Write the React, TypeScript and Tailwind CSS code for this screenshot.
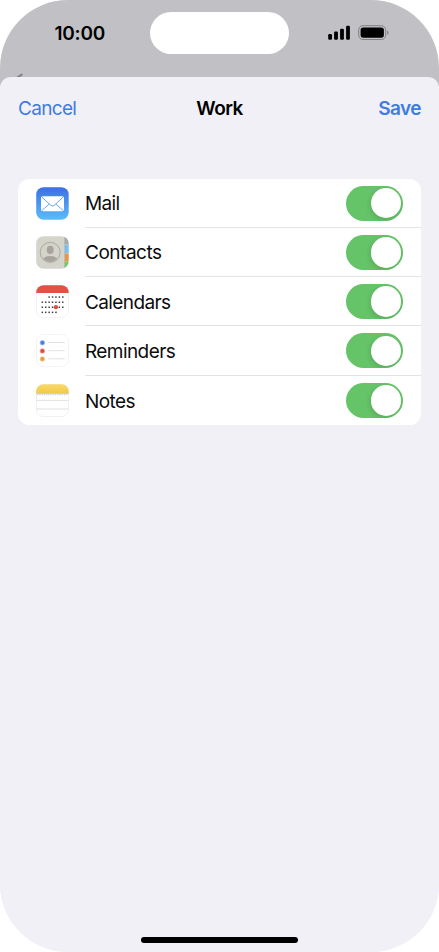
import type { ReactNode } from 'react';

function MailIcon() {
  return (
    <svg viewBox="0 0 33 33" className="size-[33px]">
      <defs>
        <linearGradient id="mail" x1="0" y1="0" x2="0" y2="1">
          <stop offset="0" stopColor="#3c6fe5" />
          <stop offset="1" stopColor="#5bbcf6" />
        </linearGradient>
      </defs>
      <rect x=".2" y=".2" width="32.5" height="32.5" rx="7.4" fill="url(#mail)" />
      <rect x="5" y="9.2" width="23" height="15" rx="1.8" fill="#fff" />
      <path d="M5.6 9.8 14.6 18.2Q16.5 19.8 18.4 18.2L27.4 9.8M5.7 23.6 13.2 17M27.3 23.6 19.8 17" fill="none" stroke="#5a9cec" strokeWidth=".9" />
    </svg>
  );
}

function ContactsIcon() {
  return (
    <svg viewBox="0 0 33 33" className="size-[33px]">
      <defs>
        <clipPath id="contacts"><rect x=".2" y=".2" width="32.5" height="32.5" rx="7.4" /></clipPath>
        <clipPath id="portrait"><circle cx="14.2" cy="16.4" r="9.5" /></clipPath>
      </defs>
      <g clipPath="url(#contacts)">
        <path fill="#d5d4ca" d="M0 0h28.7v33H0z" />
        <path fill="#a9aaa5" d="M28.7 0H33v8.5h-4.3z" />
        <path fill="#77bff5" d="M28.7 8.5H33v9h-4.3z" />
        <path fill="#ed9443" d="M28.7 17.5H33v8h-4.3z" />
        <path fill="#70cb69" d="M28.7 25.5H33V33h-4.3z" />
        <path stroke="#b4b3aa" strokeWidth=".7" d="M28.5 0v33" />
      </g>
      <circle cx="14.2" cy="16.4" r="10" fill="none" stroke="#aaa8a1" strokeWidth="1" />
      <g clipPath="url(#portrait)" fill="#a8a39d">
        <ellipse cx="14.2" cy="13.9" rx="3.5" ry="4.1" />
        <ellipse cx="14.2" cy="25" rx="8" ry="4.9" />
      </g>
    </svg>
  );
}

function CalendarIcon() {
  const rows = [
    { y: 12, from: 2, to: 7 },
    { y: 17.2, from: 0, to: 7 },
    { y: 22.2, from: 0, to: 7 },
    { y: 27.3, from: 0, to: 5 },
  ];
  return (
    <svg viewBox="0 0 33 33" className="size-[33px]">
      <defs><clipPath id="calendar"><rect x=".2" y=".2" width="32.5" height="32.5" rx="7.4" /></clipPath></defs>
      <rect x=".4" y=".4" width="32.2" height="32.2" rx="7.3" fill="#fff" stroke="#ececec" strokeWidth=".7" />
      <path d="M0 0h33v8H0z" fill="#e35045" clipPath="url(#calendar)" />
      {rows.map((r) =>
        Array.from({ length: r.to - r.from }, (_, i) => (
          <rect key={`${r.y}-${i}`} x={5.6 + (r.from + i) * 3.4} y={r.y - 0.7} width="1.5" height="1.5" fill="#404040" />
        )),
      )}
      <circle cx="19.9" cy="22.2" r="2.1" fill="#dc4b40" />
    </svg>
  );
}

function RemindersIcon() {
  const items = [
    { y: 8.7, color: '#4480ed', halo: '#b5cefa' },
    { y: 16.9, color: '#df4941', halo: '#f5b7b4' },
    { y: 25, color: '#ee9a3c', halo: '#f9d7ae' },
  ];
  return (
    <svg viewBox="0 0 33 33" className="size-[33px]">
      <rect x=".4" y=".4" width="32.2" height="32.2" rx="7.3" fill="#fff" stroke="#eee" strokeWidth=".7" />
      {items.map((item) => (
        <g key={item.y}>
          <circle cx="6.4" cy={item.y} r="2.7" fill={item.halo} />
          <circle cx="6.4" cy={item.y} r="2" fill={item.color} />
          <path d={`M12.2 ${item.y - 0.2}H28.7`} stroke="#dedede" strokeWidth=".9" />
        </g>
      ))}
    </svg>
  );
}

function NotesIcon() {
  return (
    <svg viewBox="0 0 33 33" className="size-[33px]">
      <defs>
        <clipPath id="notes"><rect x=".2" y=".2" width="32.5" height="32.5" rx="7.4" /></clipPath>
        <linearGradient id="pad" x1="0" y1="0" x2="0" y2="1">
          <stop offset="0" stopColor="#f8d970" />
          <stop offset="1" stopColor="#f2cb43" />
        </linearGradient>
      </defs>
      <rect x=".4" y=".4" width="32.2" height="32.2" rx="7.3" fill="#fff" stroke="#eaeaea" strokeWidth=".7" />
      <g clipPath="url(#notes)">
        <path d="M0 0h33v9.2H0z" fill="url(#pad)" />
        <path d="M0 9.4h33" stroke="#cfc4a0" strokeWidth=".8" />
        <path d="M1 10.7h31" stroke="#aaa" strokeWidth=".8" strokeDasharray=".9 .9" />
        <path d="M0 16.4h33M0 25h33" stroke="#dcdcdc" strokeWidth=".9" />
      </g>
    </svg>
  );
}

function Switch() {
  return (
    <button
      type="button"
      role="switch"
      aria-checked="true"
      className="mt-px flex h-[34.8px] w-[57.5px] items-center justify-end overflow-hidden rounded-full bg-[#65c368] pr-[2.3px]"
    >
      <span className="size-[30.4px] rounded-full bg-white shadow-[-1px_2px_5px_rgba(0,0,0,0.12)]" />
    </button>
  );
}

function Row({ icon, label, spacing, last }: { icon: ReactNode; label: string; spacing: string; last?: boolean }) {
  return (
    <li className="flex h-[49.25px] items-center pl-[17.5px]">
      {icon}
      <div className={`ml-[16.5px] flex h-full flex-1 items-center justify-between pr-[17.7px] ${last ? '' : 'border-b border-[#e2e2e4]'}`}>
        <span className={`pt-[3px] text-[19px] leading-6 text-[#0c0c0c] ${spacing}`}>{label}</span>
        <Switch />
      </div>
    </li>
  );
}

function StatusBar() {
  return (
    <header className="flex h-[77px] items-start pt-3">
      <time className="ml-[54.5px] w-[95.5px] pt-[9.5px] text-[19px] leading-6 font-semibold tracking-[-0.25px]">10:00</time>
      <div className="h-[41.5px] w-[139px] rounded-full bg-white" />
      <svg viewBox="0 0 64 18" className="mt-3 ml-[38px] h-[18px] w-16">
        <rect x="1.2" y="10" width="3.8" height="5.7" rx="1.2" />
        <rect x="7.1" y="7.6" width="3.8" height="8.1" rx="1.2" />
        <rect x="13.1" y="4.7" width="3.8" height="11" rx="1.2" />
        <rect x="19.1" y="1.7" width="3.8" height="14" rx="1.2" />
        <rect x="31.7" y="1.7" width="27" height="13.8" rx="4.3" fill="none" stroke="#828184" strokeWidth="1" />
        <rect x="33.6" y="3.5" width="23.3" height="10.2" rx="2.6" />
        <path d="M60.1 6.2q3 2.4 0 4.8z" fill="#828184" />
      </svg>
    </header>
  );
}

export default function App() {
  return (
    <div className="h-[952px] w-[439px] bg-white font-['Inter','Liberation_Sans',sans-serif] text-black">
      <div className="relative flex h-full flex-col overflow-hidden rounded-[68px] bg-[linear-gradient(#c1c0c4_100px,#f1f0f6_100px)]">
        <StatusBar />
        <svg viewBox="0 0 10 5" className="absolute top-[73px] left-[15px] h-[5px] w-2.5">
          <path d="M2 5 6.6 1.6" fill="none" stroke="#858488" strokeWidth="2.2" strokeLinecap="round" />
        </svg>
        <main className="relative flex flex-1 flex-col rounded-t-[11px] bg-[#f1f0f6]">
          <nav className="grid h-[63px] grid-cols-3 items-center px-[18px] text-[19px] leading-6">
            <button type="button" className="text-left tracking-[-0.68px] text-[#407bdf]">Cancel</button>
            <h1 className="text-center font-semibold tracking-[-0.6px]">Work</h1>
            <button type="button" className="text-right font-semibold tracking-[-0.55px] text-[#407bdf]">Save</button>
          </nav>
          <ul className="mx-[18px] mt-[38.5px] overflow-hidden rounded-[11.5px] bg-white">
            <Row icon={<MailIcon />} label="Mail" spacing="tracking-[-0.65px]" />
            <Row icon={<ContactsIcon />} label="Contacts" spacing="tracking-[-0.48px]" />
            <Row icon={<CalendarIcon />} label="Calendars" spacing="tracking-[-0.6px]" />
            <Row icon={<RemindersIcon />} label="Reminders" spacing="tracking-[-0.58px]" />
            <Row icon={<NotesIcon />} label="Notes" spacing="tracking-[-0.55px]" last />
          </ul>
          <div className="mx-auto mt-auto mb-[9px] h-[5.7px] w-[157px] rounded-full bg-black" />
        </main>
      </div>
    </div>
  );
}
